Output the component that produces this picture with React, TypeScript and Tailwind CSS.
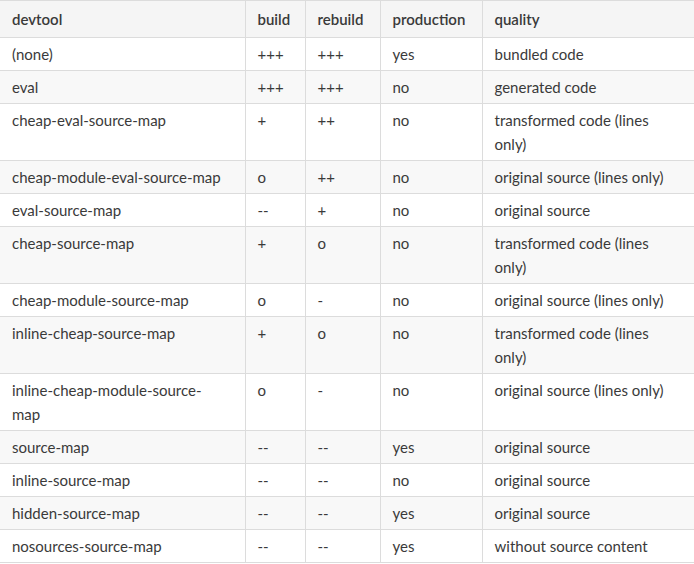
import React from "react";

type Row = { d: React.ReactNode; b: string; r: string; p: string; q: React.ReactNode };

const rows: Row[] = [
  { d: "(none)", b: "+++", r: "+++", p: "yes", q: "bundled code" },
  { d: "eval", b: "+++", r: "+++", p: "no", q: "generated code" },
  { d: "cheap-eval-source-map", b: "+", r: "++", p: "no", q: <>transformed code (lines<br />only)</> },
  { d: "cheap-module-eval-source-map", b: "o", r: "++", p: "no", q: "original source (lines only)" },
  { d: "eval-source-map", b: "--", r: "+", p: "no", q: "original source" },
  { d: "cheap-source-map", b: "+", r: "o", p: "no", q: <>transformed code (lines<br />only)</> },
  { d: "cheap-module-source-map", b: "o", r: "-", p: "no", q: "original source (lines only)" },
  { d: "inline-cheap-source-map", b: "+", r: "o", p: "no", q: <>transformed code (lines<br />only)</> },
  { d: <>inline-cheap-module-source-<br />map</>, b: "o", r: "-", p: "no", q: "original source (lines only)" },
  { d: "source-map", b: "--", r: "--", p: "yes", q: "original source" },
  { d: "inline-source-map", b: "--", r: "--", p: "no", q: "original source" },
  { d: "hidden-source-map", b: "--", r: "--", p: "yes", q: "original source" },
  { d: "nosources-source-map", b: "--", r: "--", p: "yes", q: "without source content" },
];

const cell = "px-3 py-1 align-top whitespace-nowrap border-r border-[#dcdcdc] last:border-r-0";
const hcell = "px-3 py-[6px] text-left font-semibold whitespace-nowrap border-r border-[#dcdcdc] last:border-r-0";

export default function App() {
  return (
    <div className="w-[694px] h-[564px] overflow-hidden bg-white" style={{ fontFamily: "Lato, 'Noto Sans', sans-serif" }}>
      <table className="border-collapse table-fixed w-[700px] text-[15px] leading-6 text-[#3a3a3a]">
        <colgroup>
          <col className="w-[245px]" />
          <col className="w-[60px]" />
          <col className="w-[75px]" />
          <col className="w-[102px]" />
          <col className="w-[218px]" />
        </colgroup>
        <thead>
          <tr className="bg-[#f5f5f5] border-t border-b border-[#dcdcdc]">
            <th className={hcell}>devtool</th>
            <th className={hcell}>build</th>
            <th className={hcell}>rebuild</th>
            <th className={hcell}>production</th>
            <th className={hcell}>quality</th>
          </tr>
        </thead>
        <tbody>
          {rows.map((r, i) => (
            <tr key={i} className={`border-b border-[#dcdcdc] ${i % 2 === 1 ? "bg-[#f8f8f8]" : "bg-white"}`}>
              <td className={cell}>{r.d}</td>
              <td className={cell}>{r.b}</td>
              <td className={cell}>{r.r}</td>
              <td className={cell}>{r.p}</td>
              <td className={cell}>{r.q}</td>
            </tr>
          ))}
        </tbody>
      </table>
    </div>
  );
}
